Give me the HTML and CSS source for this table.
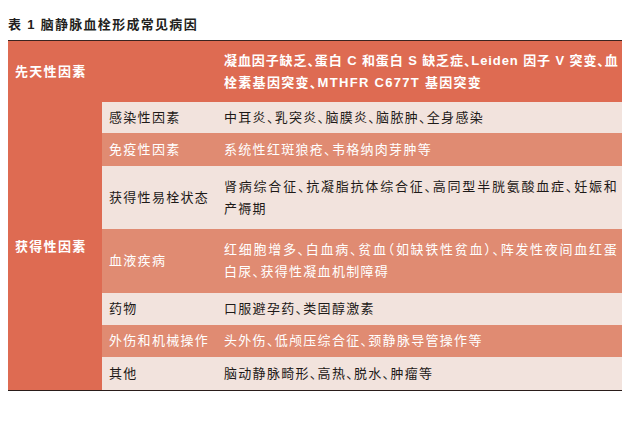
FILE: index.html
```html
<!DOCTYPE html>
<html lang="zh-CN">
<head>
<meta charset="utf-8">
<title>表1 脑静脉血栓形成常见病因</title>
<link rel="stylesheet" href="styles.css">
</head>
<body>
<div class="caption">表 1 脑静脉血栓形成常见病因</div>
<table class="causes">
  <colgroup>
    <col class="c1"><col class="c2"><col class="c3">
  </colgroup>
  <tr class="r-head">
    <td colspan="2" class="cat">先天性因素</td>
    <td class="desc bold"><span class="jl">凝血因子缺乏、蛋白 C 和蛋白 S 缺乏症、Leiden 因子 V 突变、血</span><span class="ln">栓素基因突变、MTHFR C677T 基因突变</span></td>
  </tr>
  <tr class="r-light h31">
    <td rowspan="7" class="cat side">获得性因素</td>
    <td class="sub">感染性因素</td>
    <td class="desc">中耳炎、乳突炎、脑膜炎、脑脓肿、全身感染</td>
  </tr>
  <tr class="r-mid h33">
    <td class="sub">免疫性因素</td>
    <td class="desc">系统性红斑狼疮、韦格纳肉芽肿等</td>
  </tr>
  <tr class="r-light h63">
    <td class="sub">获得性易栓状态</td>
    <td class="desc two"><span class="jl">肾病综合征、抗凝脂抗体综合征、高同型半胱氨酸血症、妊娠和</span><span class="ln">产褥期</span></td>
  </tr>
  <tr class="r-mid h64">
    <td class="sub">血液疾病</td>
    <td class="desc two"><span class="jl">红细胞增多、白血病、贫血（如缺铁性贫血）、阵发性夜间血红蛋</span><span class="ln">白尿、获得性凝血机制障碍</span></td>
  </tr>
  <tr class="r-light h32">
    <td class="sub">药物</td>
    <td class="desc">口服避孕药、类固醇激素</td>
  </tr>
  <tr class="r-mid h32">
    <td class="sub">外伤和机械操作</td>
    <td class="desc">头外伤、低颅压综合征、颈静脉导管操作等</td>
  </tr>
  <tr class="r-light h33">
    <td class="sub">其他</td>
    <td class="desc">脑动静脉畸形、高热、脱水、肿瘤等</td>
  </tr>
</table>
</body>
</html>
```
FILE: styles.css
```css
html, body {
  margin: 0;
  padding: 0;
  background: #ffffff;
}
body {
  padding: 16px 8px 0 8px;
  font-family: "Liberation Sans", "Noto Sans CJK SC", sans-serif;
  font-size: 13px;
  letter-spacing: 1.3px;
  font-feature-settings: "halt";
  color: #1e1a18;
}
.caption {
  height: 17px;
  line-height: 17px;
  margin-bottom: 7px;
  font-weight: 600;
  color: #231f1d;
}
.causes {
  width: 614px;
  border-collapse: separate;
  border-spacing: 0;
  border-top: 1px solid #3b2420;
  border-bottom: 1px solid #2a1d1a;
  table-layout: fixed;
}
.c1 { width: 94px; }
.c2 { width: 116px; }
.c3 { width: 404px; }
.causes td {
  padding: 0;
  vertical-align: middle;
  line-height: 18px;
}
.r-head { height: 61px; background: #de6b52; color: #ffffff; }
.r-light { background: #f2e3dd; color: #1e1a18; }
.r-mid { background: #e08b72; color: #ffffff; }
.h31 { height: 31px; }
.h32 { height: 32px; }
.h33 { height: 33px; }
.h63 { height: 63px; }
.h64 { height: 64px; }
.cat {
  padding-left: 7px !important;
  font-weight: 600;
  color: #ffffff;
}
.side {
  background: #de6b52;
  padding-top: 2px !important;
}
.sub {
  padding-left: 7px !important;
  white-space: nowrap;
}
.desc {
  padding-left: 6px !important;
  padding-right: 4px !important;
}
.bold { font-weight: 600; }
.two, .r-head .desc { line-height: 22px !important; }
.jl {
  display: block;
  white-space: nowrap;
  text-align: justify;
  text-align-last: justify;
}
.r-head .jl { letter-spacing: 0.9px; }
.ln { display: block; }
```
